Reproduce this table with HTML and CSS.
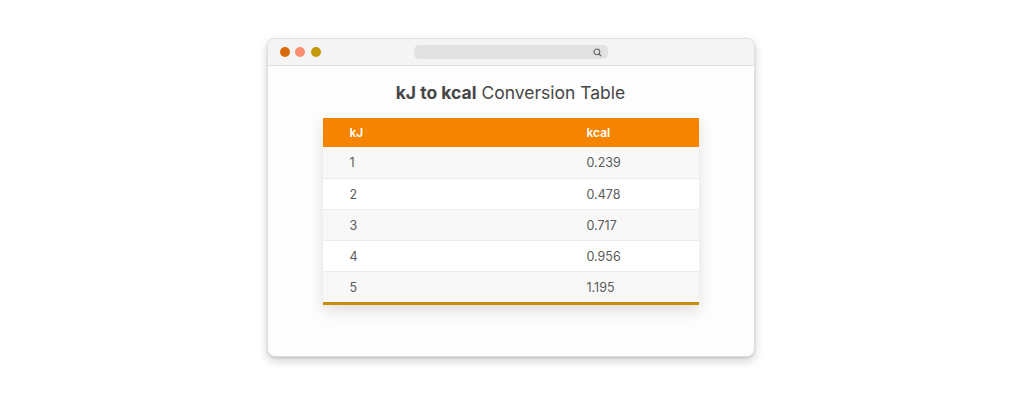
FILE: index.html
```html
<!DOCTYPE html>
<html lang="en">
<head>
<meta charset="utf-8">
<title>kJ to kcal Conversion Table</title>
<link rel="stylesheet" href="styles.css">
</head>
<body>
<div class="stage">
  <div class="window">
    <div class="titlebar">
      <div class="dots">
        <span class="dot dot-red"></span>
        <span class="dot dot-salmon"></span>
        <span class="dot dot-yellow"></span>
      </div>
      <div class="address">
        <svg class="search" width="9" height="9" viewBox="0 0 10 10"><circle cx="4.3" cy="4.3" r="3.2" fill="none" stroke="#666" stroke-width="1.3"/><path d="M6.6 6.6 L8.8 8.8" stroke="#666" stroke-width="1.4" stroke-linecap="round"/></svg>
      </div>
    </div>
    <div class="content">
      <h1 class="title"><strong>kJ to kcal</strong> Conversion Table</h1>
      <table class="conv">
        <thead>
          <tr><th class="c1">kJ</th><th class="c2">kcal</th></tr>
        </thead>
        <tbody>
          <tr><td>1</td><td>0.239</td></tr>
          <tr><td>2</td><td>0.478</td></tr>
          <tr><td>3</td><td>0.717</td></tr>
          <tr><td>4</td><td>0.956</td></tr>
          <tr><td>5</td><td>1.195</td></tr>
        </tbody>
      </table>
    </div>
  </div>
</div>
</body>
</html>
```
FILE: styles.css
```css
html, body {
  margin: 0;
  padding: 0;
  background: #ffffff;
}
body {
  font-family: Inter, "Noto Sans", "Liberation Sans", sans-serif;
  color: #555;
}
.stage {
  display: flex;
  justify-content: center;
  padding-top: 38px;
  height: 398px;
  box-sizing: border-box;
}
.window {
  width: 488px;
  height: 319px;
  margin-right: 3px;
  background: #fdfdfd;
  border: 1px solid #dedede;
  border-radius: 8px;
  box-sizing: border-box;
  box-shadow: 0 4px 10px rgba(0,0,0,0.18), 0 1px 2px rgba(0,0,0,0.1);
  overflow: hidden;
  display: flex;
  flex-direction: column;
}
.titlebar {
  height: 26px;
  flex: none;
  background: #f4f4f4;
  border-bottom: 1px solid #dddddd;
  display: flex;
  align-items: center;
}
.dots {
  display: flex;
  gap: 5.5px;
  padding-left: 12px;
}
.dot {
  width: 10px;
  height: 10px;
  border-radius: 50%;
  display: block;
}
.dot-red { background: #d96a0b; }
.dot-salmon { background: #f98e71; }
.dot-yellow { background: #c49a0c; }
.address {
  margin-left: 93px;
  width: 194px;
  height: 14px;
  background: #e2e2e2;
  border-radius: 5px;
  display: flex;
  align-items: center;
  justify-content: flex-end;
  padding-right: 6px;
  box-sizing: border-box;
}
.search { display: block; }
.content {
  display: flex;
  flex-direction: column;
  align-items: center;
  padding-top: 15px;
}
.title {
  margin: 0;
  font-size: 17.5px;
  font-weight: 400;
  color: #474747;
  line-height: 24px;
  letter-spacing: 0;
}
.title strong {
  font-weight: 700;
}
.conv {
  margin-top: 13px;
  width: 376px;
  border-collapse: collapse;
  font-size: 12.5px;
  box-shadow: 0 6px 14px rgba(0,0,0,0.12);
  border-bottom: 3px solid #c88d0a;
}
.conv th {
  background: #f58400;
  color: #ffffff;
  font-weight: 600;
  text-align: left;
  height: 29px;
  padding: 0 0 0 27px;
  font-size: 12px;
}
.conv th.c1 { width: 210px; }
.conv td {
  height: 30px;
  padding: 0 0 0 27px;
  color: #5b5b5b;
  border-top: 1px solid #ececec;
}
.conv tbody tr:first-child td { border-top: none; height: 31px; }
.conv tbody tr:nth-child(odd) td { background: #f8f8f8; }
.conv tbody tr:nth-child(even) td { background: #ffffff; }
```
